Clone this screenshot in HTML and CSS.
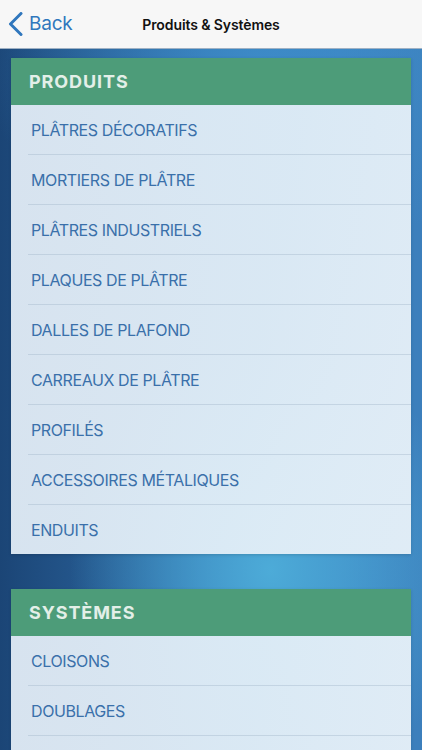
FILE: index.html
```html
<!DOCTYPE html>
<html lang="fr">
<head>
    <meta charset="UTF-8">
    <meta name="viewport" content="width=device-width, initial-scale=1.0">
    <title>Produits &amp; Systèmes</title>
    <link rel="stylesheet" href="styles.css">
</head>
<body>
    <header class="nav-bar">
        <a class="back-btn" href="#">
            <svg class="back-chevron" width="15" height="24" viewBox="0 0 15 24">
                <path d="M13 1.5 L2.5 12 L13 22.5" fill="none" stroke="currentColor" stroke-width="3" stroke-linecap="round" stroke-linejoin="round"/>
            </svg>
            <span>Back</span>
        </a>
        <h1 class="nav-title">Produits &amp; Systèmes</h1>
    </header>

    <main class="content">
        <section class="group">
            <h2 class="group-title">PRODUITS</h2>
            <ul class="group-list">
                <li class="group-item">PLÂTRES DÉCORATIFS</li>
                <li class="group-item">MORTIERS DE PLÂTRE</li>
                <li class="group-item">PLÂTRES INDUSTRIELS</li>
                <li class="group-item">PLAQUES DE PLÂTRE</li>
                <li class="group-item">DALLES DE PLAFOND</li>
                <li class="group-item">CARREAUX DE PLÂTRE</li>
                <li class="group-item">PROFILÉS</li>
                <li class="group-item">ACCESSOIRES MÉTALIQUES</li>
                <li class="group-item">ENDUITS</li>
            </ul>
        </section>

        <section class="group">
            <h2 class="group-title">SYSTÈMES</h2>
            <ul class="group-list group-list-open">
                <li class="group-item">CLOISONS</li>
                <li class="group-item">DOUBLAGES</li>
            </ul>
        </section>
    </main>
</body>
</html>
```

FILE: styles.css
```css
* {
    margin: 0;
    padding: 0;
    box-sizing: border-box;
}

body {
    font-family: 'Inter', 'Liberation Sans', sans-serif;
    height: 100vh;
    overflow: hidden;
    display: flex;
    flex-direction: column;
    background:
        radial-gradient(ellipse 200px 230px at 64% 76%, rgba(78, 174, 218, 0.95), rgba(78, 174, 218, 0) 100%),
        radial-gradient(ellipse 280px 200px at 62% 8%, rgba(64, 146, 206, 0.7), rgba(64, 146, 206, 0) 100%),
        linear-gradient(to right, #1b4576 0%, #25598f 22%, #3273b0 50%, #3a80bf 80%, #3c7fbc 100%);
}

/* Top navigation */
.nav-bar {
    position: relative;
    height: 49px;
    flex-shrink: 0;
    background-color: #f7f7f7;
    border-bottom: 1px solid #9fb1c4;
    display: flex;
    align-items: center;
    justify-content: center;
}

.back-btn {
    position: absolute;
    left: 8px;
    top: 12px;
    display: flex;
    align-items: center;
    gap: 6px;
    color: #3077bd;
    text-decoration: none;
    font-size: 19px;
    letter-spacing: -0.2px;
    line-height: 24px;
}

.back-chevron {
    display: block;
}

.nav-title {
    font-size: 14px;
    font-weight: 600;
    letter-spacing: -0.1px;
    color: #111;
}

/* Lists */
.content {
    padding: 9px 11px;
    display: flex;
    flex-direction: column;
    gap: 35px;
}

.group {
    box-shadow: 0 1px 3px rgba(0, 0, 0, 0.15);
}

.group-title {
    height: 47px;
    display: flex;
    align-items: center;
    padding-left: 18px;
    background-color: #4d9c79;
    color: #e3efe8;
    font-size: 18px;
    font-weight: 700;
    letter-spacing: 0.9px;
}

.group-list {
    list-style: none;
    background: linear-gradient(100deg, rgba(221, 232, 243, 0.97) 0%, rgba(226, 238, 247, 0.95) 60%, rgba(230, 240, 248, 0.96) 100%);
}

.group-item {
    height: 50px;
    margin-left: 17px;
    padding-left: 3px;
    display: flex;
    align-items: center;
    border-bottom: 1px solid rgba(160, 180, 200, 0.4);
    color: #3a70aa;
    font-size: 16px;
    letter-spacing: -0.4px;
}

.group-item:last-child {
    height: 49px;
    border-bottom: none;
}

.group-list-open {
    padding-bottom: 40px;
}

.group-list-open .group-item:last-child {
    height: 50px;
    border-bottom: 1px solid rgba(160, 180, 200, 0.4);
}
```
